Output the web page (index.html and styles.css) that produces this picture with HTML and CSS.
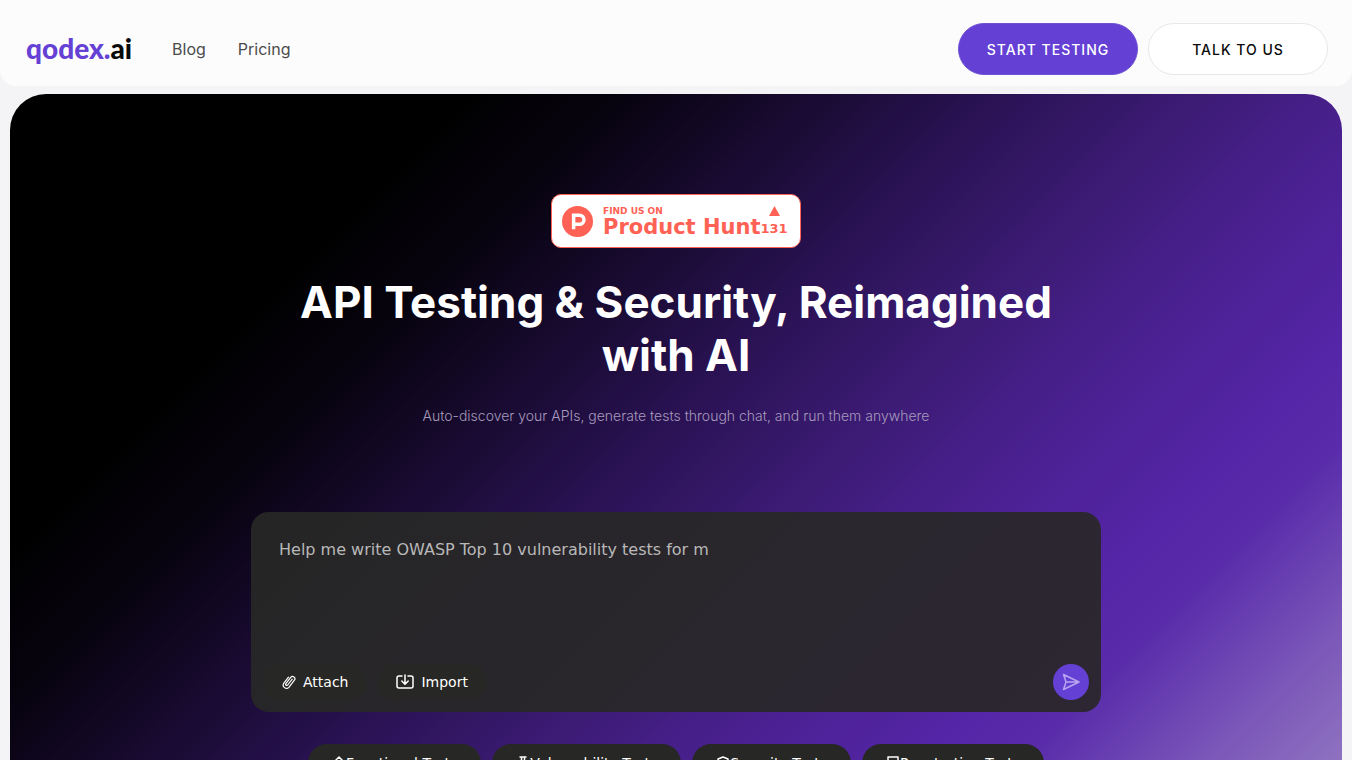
FILE: index.html
```html
<!DOCTYPE html>
<html lang="en">
<head>
  <meta charset="UTF-8">
  <meta name="viewport" content="width=device-width, initial-scale=1.0">
  <title>qodex.ai</title>
  <link rel="stylesheet" href="styles.css">
</head>
<body>

<header class="header">
  <a class="logo" href="#"><span class="logo-name">qodex.</span>ai</a>
  <nav class="nav">
    <a href="#">Blog</a>
    <a href="#">Pricing</a>
  </nav>
  <div class="header-actions">
    <a class="btn btn-primary" href="#">START TESTING</a>
    <a class="btn btn-light" href="#">TALK TO US</a>
  </div>
</header>

<main class="hero">
  <a class="ph-badge" href="#">
    <svg class="ph-logo" viewBox="0 0 32 32" aria-hidden="true">
      <circle cx="16" cy="16" r="16" fill="#ff6154"/>
      <path d="M12 24V9.500h6a4.700 4.700 0 0 1 0 9.400h-6" fill="none" stroke="#fff" stroke-width="3.600"/>
    </svg>
    <span class="ph-text">
      <span class="ph-small">FIND US ON</span>
      <span class="ph-name">Product Hunt</span>
    </span>
    <span class="ph-votes">
      <svg class="ph-arrow" viewBox="0 0 11 10" aria-hidden="true"><path d="M5.500 0L11 10H0z" fill="#ff6154"/></svg>
      <span>131</span>
    </span>
  </a>

  <h1 class="title">API Testing &amp; Security, Reimagined with AI</h1>
  <p class="subtitle">Auto-discover your APIs, generate tests through chat, and run them anywhere</p>

  <form class="prompt">
    <textarea class="prompt-input" aria-label="Prompt" placeholder="Help me write OWASP Top 10 vulnerability tests for m"></textarea>
    <div class="prompt-bar">
      <button class="tool" type="button">
        <svg class="tool-clip" viewBox="0 0 14 16" aria-hidden="true">
          <path d="M10.200 5.200L5.700 11a1.100 1.100 0 0 1-1.800-1.400l4.800-6.200a2.300 2.300 0 0 1 3.700 2.800l-5.500 7.100a3.300 3.300 0 0 1-5.200-4l4.800-6.200"/>
        </svg>
        Attach
      </button>
      <button class="tool" type="button">
        <svg class="tool-import" viewBox="0 0 18 14" aria-hidden="true">
          <path d="M6 1H3a2 2 0 0 0-2 2v8a2 2 0 0 0 2 2h12a2 2 0 0 0 2-2V3a2 2 0 0 0-2-2h-3M9 0v9M5.800 6L9 9.200 12.200 6"/>
        </svg>
        Import
      </button>
      <button class="send" type="submit" aria-label="Send">
        <svg viewBox="0 0 18 18" aria-hidden="true">
          <path d="M1.500 1.500L17 9 1.500 16.500 4 9zM4 9h13"/>
        </svg>
      </button>
    </div>
  </form>

  <div class="chips">
    <button class="chip" type="button">
      <svg viewBox="0 0 14 14" aria-hidden="true"><path d="M7 1l4 4H9v8H5V5H3z"/></svg>
      Functional Tests
    </button>
    <button class="chip" type="button">
      <svg viewBox="0 0 14 14" aria-hidden="true"><path d="M4 1h6M5.500 1v4L2 13h10L8.500 5V1"/></svg>
      Vulnerability Tests
    </button>
    <button class="chip" type="button">
      <svg viewBox="0 0 14 14" aria-hidden="true"><path d="M7 1l5 2v4c0 3-2 5-5 6-3-1-5-3-5-6V3z"/></svg>
      Security Tests
    </button>
    <button class="chip" type="button">
      <svg viewBox="0 0 14 14" aria-hidden="true"><path d="M2 1h10v12H2zM5 10h4"/></svg>
      Penetration Tests
    </button>
  </div>
</main>

</body>
</html>
```
FILE: styles.css
```css
* {
  box-sizing: border-box;
}

html {
  scrollbar-width: none;
}

body {
  margin: 0;
  background: #f4f4f7;
  font-family: Inter, sans-serif;
}

a {
  text-decoration: none;
  color: inherit;
}

button {
  border: 0;
  cursor: pointer;
  font-family: "DejaVu Sans", sans-serif;
}

/* header */
.header {
  display: flex;
  align-items: center;
  padding: 23px 24px 11px;
  background: #fcfcfd;
  border-radius: 0 0 16px 16px;
}

.logo {
  padding: 0 0 2px 2px;
  font-family: Lato, sans-serif;
  font-size: 28px;
  font-weight: 900;
  line-height: 32px;
  color: #0a0a0a;
}

.logo-name {
  color: #6440d4;
}

.nav {
  display: flex;
  gap: 32px;
  margin-left: 40px;
  font-size: 16px;
  color: #4b4b4b;
}

.header-actions {
  display: flex;
  gap: 10px;
  margin-left: auto;
}

.btn {
  display: flex;
  align-items: center;
  justify-content: center;
  width: 180px;
  height: 52px;
  border: 1px solid #6f52d2;
  border-radius: 26px;
  font-size: 14px;
  font-weight: 500;
  letter-spacing: 1px;
}

.btn-primary {
  background: #6440d4;
  color: #fff;
}

.btn-light {
  background: #fff;
  border-color: #e8e8ea;
  color: #0a0a0a;
}

/* hero */
.hero {
  display: flex;
  flex-direction: column;
  align-items: center;
  margin: 8px 10px 0;
  padding: 100px 24px 60px;
  border-radius: 36px;
  background: linear-gradient(135deg, #000 320px, #07030e 430px, #190b32 570px, #2a1254 700px, #3d1c77 850px, #4a2090 970px, #5425a6 1110px, #5a2cab 1190px, #7955b8 1310px, #9277c2 1430px);
}

.ph-badge {
  display: flex;
  align-items: center;
  width: 250px;
  height: 54px;
  padding: 1px 10px 0;
  border: 1px solid #ff6154;
  border-radius: 10px;
  background: #fff;
  color: #ff6154;
  font-family: "DejaVu Sans", sans-serif;
  font-weight: 700;
}

.ph-logo {
  width: 31px;
  height: 31px;
  margin-right: 10px;
}

.ph-text {
  display: flex;
  flex-direction: column;
  white-space: nowrap;
}

.ph-small {
  font-size: 9px;
  line-height: 10px;
}

.ph-name {
  font-size: 21px;
  line-height: 22px;
}

.ph-votes {
  display: flex;
  flex-direction: column;
  align-items: center;
  gap: 5px;
  font-size: 13px;
  line-height: 16px;
}

.ph-arrow {
  width: 11px;
  height: 10px;
}

.title {
  max-width: 800px;
  margin: 28px 0 24px;
  color: #fff;
  font-size: 44px;
  font-weight: 700;
  line-height: 53px;
  text-align: center;
}

.subtitle {
  margin: 0;
  color: #a79bbd;
  font-size: 14px;
  font-weight: 300;
  line-height: 20px;
  text-align: center;
}

/* prompt box */
.prompt {
  display: flex;
  flex-direction: column;
  width: 100%;
  max-width: 850px;
  height: 200px;
  margin-top: 86px;
  padding: 12px;
  border-radius: 18px;
  background: linear-gradient(135deg, #252525, #2d2733);
}

.prompt-input {
  flex: 1;
  padding: 16px;
  border: 0;
  outline: 0;
  resize: none;
  background: transparent;
  color: #fff;
  font-family: "DejaVu Sans", sans-serif;
  font-size: 16px;
}

.prompt-input::placeholder {
  color: #b8b8b8;
}

.prompt-bar {
  display: flex;
  align-items: center;
  gap: 10px;
}

.tool {
  display: flex;
  align-items: center;
  gap: 7px;
  height: 36px;
  padding: 0 19px;
  border-radius: 18px;
  background: #272725;
  color: #fff;
  font-size: 14px;
}

.tool svg,
.send svg,
.chip svg {
  fill: none;
  stroke: currentColor;
  stroke-width: 1.5;
  stroke-linecap: round;
  stroke-linejoin: round;
}

.tool .tool-clip {
  width: 14px;
  height: 16px;
  stroke-width: 1.2;
}

.tool-import {
  width: 18px;
  height: 14px;
  overflow: visible;
}

.send {
  display: flex;
  align-items: center;
  justify-content: center;
  width: 36px;
  height: 36px;
  margin-left: auto;
  padding: 0;
  border-radius: 50%;
  background: #6440d4;
  color: #b9a4f0;
}

.send svg {
  width: 18px;
  height: 18px;
}

/* suggestions */
.chips {
  display: flex;
  flex-wrap: wrap;
  justify-content: center;
  gap: 11px;
  margin-top: 32px;
}

.chip {
  display: flex;
  align-items: center;
  height: 38px;
  padding: 0 24px;
  border-radius: 19px;
  background: #272725;
  color: #fff;
  font-size: 14px;
}

.chip svg {
  width: 14px;
  height: 14px;
}
```
